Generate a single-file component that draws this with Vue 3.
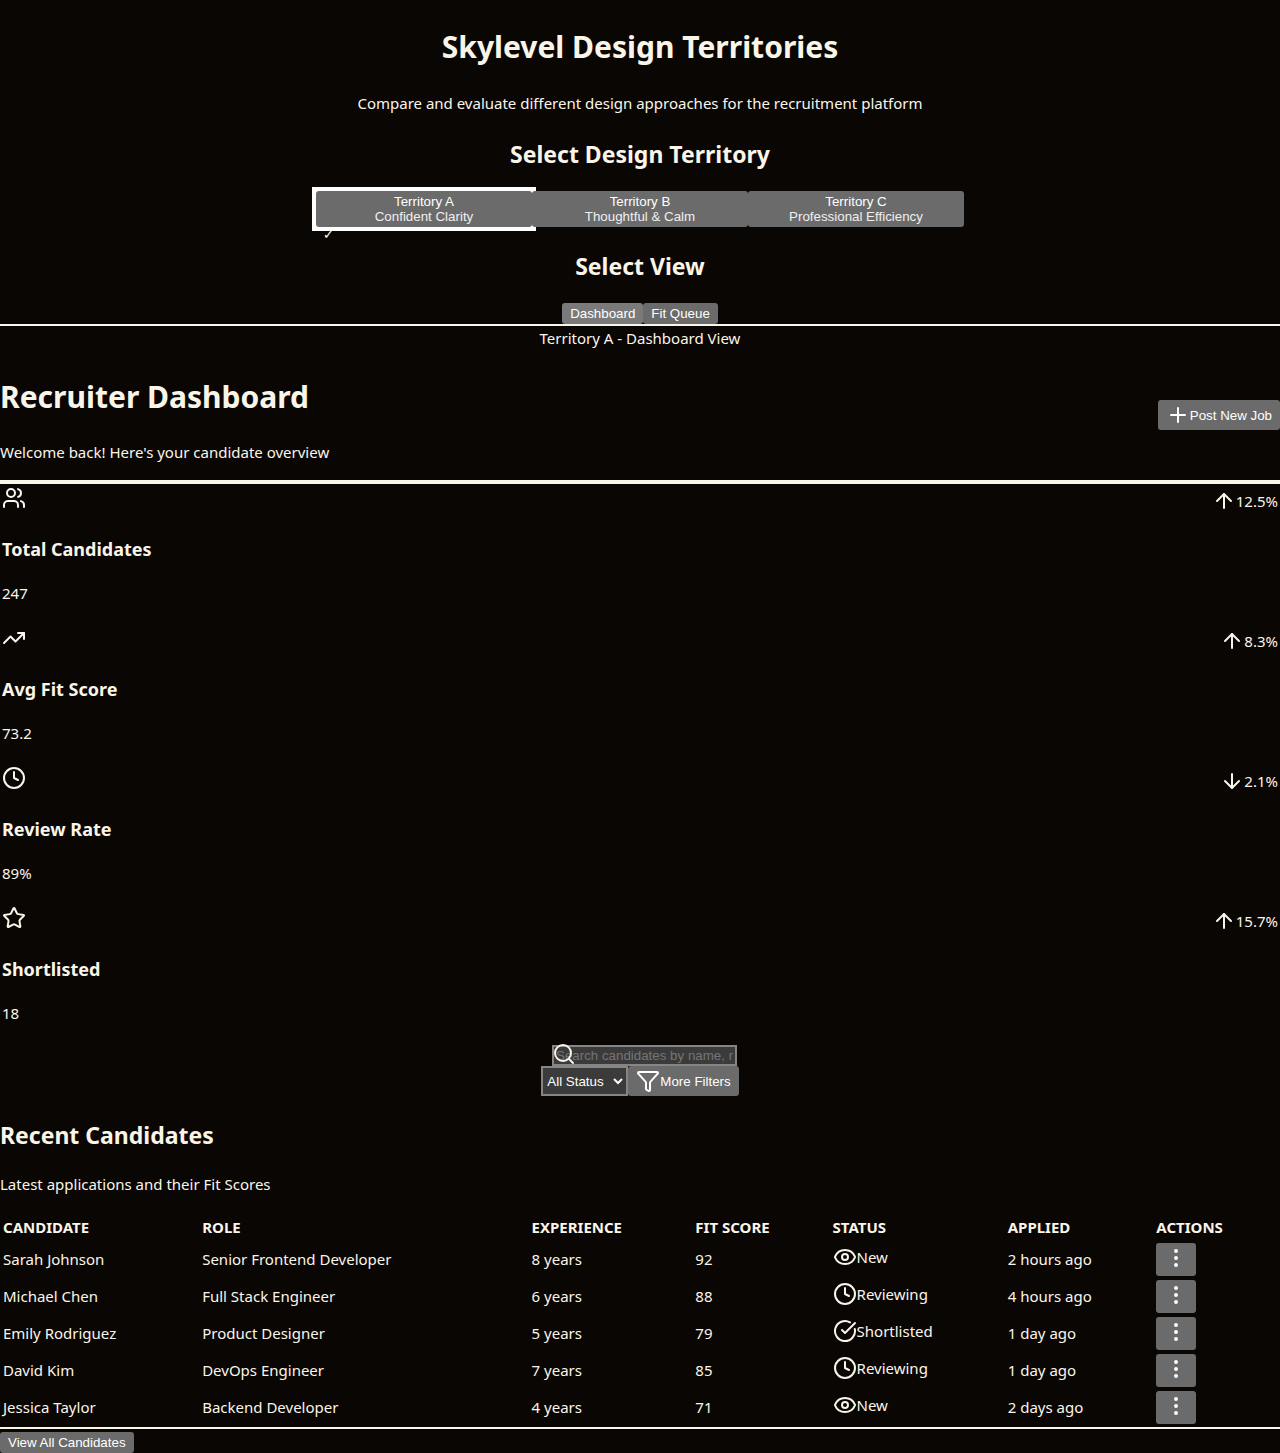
<script setup>
import { ref } from 'vue'

const territories = [
  { id: 'A', name: 'Confident Clarity' },
  { id: 'B', name: 'Thoughtful & Calm' },
  { id: 'C', name: 'Professional Efficiency' },
]
const territory = ref('A')

const views = ['Dashboard', 'Fit Queue']
const view = ref('Dashboard')

const icons = {
  plus: ['M5 12h14', 'M12 5v14'],
  up: ['m5 12 7-7 7 7', 'M12 19V5'],
  down: ['M12 5v14', 'm19 12-7 7-7-7'],
  users: [
    'M16 21v-2a4 4 0 0 0-4-4H6a4 4 0 0 0-4 4v2',
    'M16 3.128a4 4 0 0 1 0 7.744',
    'M22 21v-2a4 4 0 0 0-3-3.87',
    'M5 7a4 4 0 1 0 8 0a4 4 0 1 0-8 0',
  ],
  trend: ['M16 7h6v6', 'm22 7-8.5 8.5-5-5L2 17'],
  clock: ['M12 6v6l4 2', 'M2 12a10 10 0 1 0 20 0a10 10 0 1 0-20 0'],
  star: [
    'M11.525 2.295a.53.53 0 0 1 .95 0l2.31 4.679a2.123 2.123 0 0 0 1.595 1.16l5.166.756a.53.53 0 0 1 .294.904l-3.736 3.638a2.123 2.123 0 0 0-.611 1.878l.882 5.14a.53.53 0 0 1-.771.56l-4.618-2.428a2.122 2.122 0 0 0-1.973 0L6.396 21.01a.53.53 0 0 1-.77-.56l.881-5.139a2.122 2.122 0 0 0-.611-1.879L2.16 9.795a.53.53 0 0 1 .294-.906l5.165-.755a2.122 2.122 0 0 0 1.597-1.16z',
  ],
  search: ['m21 21-4.34-4.34', 'M3 11a8 8 0 1 0 16 0a8 8 0 1 0-16 0'],
  funnel: [
    'M10 20a1 1 0 0 0 .553.895l2 1A1 1 0 0 0 14 21v-7a2 2 0 0 1 .517-1.341L21.74 4.67A1 1 0 0 0 21 3H3a1 1 0 0 0-.742 1.67l7.225 7.989A2 2 0 0 1 10 14z',
  ],
  eye: [
    'M2.062 12.348a1 1 0 0 1 0-.696 10.75 10.75 0 0 1 19.876 0 1 1 0 0 1 0 .696 10.75 10.75 0 0 1-19.876 0',
    'M9 12a3 3 0 1 0 6 0a3 3 0 1 0-6 0',
  ],
  check: ['M21.801 10A10 10 0 1 1 17 3.335', 'm9 11 3 3L22 4'],
  more: [
    'M11 12a1 1 0 1 0 2 0a1 1 0 1 0-2 0',
    'M11 5a1 1 0 1 0 2 0a1 1 0 1 0-2 0',
    'M11 19a1 1 0 1 0 2 0a1 1 0 1 0-2 0',
  ],
}

const stats = [
  { icon: 'users', label: 'Total Candidates', value: '247', dir: 'up', change: '12.5%' },
  { icon: 'trend', label: 'Avg Fit Score', value: '73.2', dir: 'up', change: '8.3%' },
  { icon: 'clock', label: 'Review Rate', value: '89%', dir: 'down', change: '2.1%' },
  { icon: 'star', label: 'Shortlisted', value: '18', dir: 'up', change: '15.7%' },
]

const columns = ['Candidate', 'Role', 'Experience', 'Fit Score', 'Status', 'Applied', 'Actions']

const statusIcon = { New: 'eye', Reviewing: 'clock', Shortlisted: 'check' }

const candidates = [
  { name: 'Sarah Johnson', role: 'Senior Frontend Developer', exp: '8 years', score: 92, status: 'New', applied: '2 hours ago' },
  { name: 'Michael Chen', role: 'Full Stack Engineer', exp: '6 years', score: 88, status: 'Reviewing', applied: '4 hours ago' },
  { name: 'Emily Rodriguez', role: 'Product Designer', exp: '5 years', score: 79, status: 'Shortlisted', applied: '1 day ago' },
  { name: 'David Kim', role: 'DevOps Engineer', exp: '7 years', score: 85, status: 'Reviewing', applied: '1 day ago' },
  { name: 'Jessica Taylor', role: 'Backend Developer', exp: '4 years', score: 71, status: 'New', applied: '2 days ago' },
]
</script>

<template>
  <div class="page">
    <header class="selector">
      <h1>Skylevel Design Territories</h1>
      <p class="intro">Compare and evaluate different design approaches for the recruitment platform</p>

      <h2>Select Design Territory</h2>
      <div class="territories">
        <div v-for="t in territories" :key="t.id" class="territory" :class="{ active: territory === t.id }">
          <button type="button" class="btn" :aria-pressed="territory === t.id" @click="territory = t.id">
            <span>Territory {{ t.id }}</span>
            <span class="sub">{{ t.name }}</span>
          </button>
          <span v-if="territory === t.id" class="tick">✓</span>
        </div>
      </div>

      <h2 class="view-title">Select View</h2>
      <div class="views">
        <button
          v-for="v in views" :key="v" type="button" class="btn"
          :class="{ current: view === v }" @click="view = v"
        >{{ v }}</button>
      </div>
    </header>

    <div class="caption">Territory {{ territory }} - {{ view }} View</div>

    <main>
      <header class="dash-head">
        <div>
          <h1>Recruiter Dashboard</h1>
          <p>Welcome back! Here's your candidate overview</p>
        </div>
        <button type="button" class="btn with-icon">
          <svg class="icon" viewBox="0 0 24 24" aria-hidden="true"><path v-for="d in icons.plus" :key="d" :d="d" /></svg>
          <span>Post New Job</span>
        </button>
      </header>

      <section class="stats">
        <article v-for="s in stats" :key="s.label" class="stat">
          <div class="stat-top">
            <svg class="icon" viewBox="0 0 24 24" aria-hidden="true"><path v-for="d in icons[s.icon]" :key="d" :d="d" /></svg>
            <div class="change">
              <svg class="icon" viewBox="0 0 24 24" aria-hidden="true"><path v-for="d in icons[s.dir]" :key="d" :d="d" /></svg>
              <span>{{ s.change }}</span>
            </div>
          </div>
          <h3>{{ s.label }}</h3>
          <p>{{ s.value }}</p>
        </article>
      </section>

      <section class="filters">
        <div class="search">
          <input type="text" aria-label="Search candidates" placeholder="Search candidates by name, role, or skills..." />
          <svg class="icon" viewBox="0 0 24 24" aria-hidden="true"><path v-for="d in icons.search" :key="d" :d="d" /></svg>
        </div>
        <div class="filter-row">
          <select aria-label="Status">
            <option>All Status</option>
            <option>New</option>
            <option>Reviewing</option>
            <option>Shortlisted</option>
          </select>
          <button type="button" class="btn with-icon">
            <svg class="icon" viewBox="0 0 24 24" aria-hidden="true"><path v-for="d in icons.funnel" :key="d" :d="d" /></svg>
            <span>More Filters</span>
          </button>
        </div>
      </section>

      <section class="recent">
        <h2>Recent Candidates</h2>
        <p>Latest applications and their Fit Scores</p>
        <table>
          <colgroup>
            <col class="c-name" /><col class="c-role" /><col class="c-exp" /><col class="c-score" />
            <col class="c-status" /><col class="c-applied" /><col />
          </colgroup>
          <thead>
            <tr><th v-for="c in columns" :key="c" scope="col">{{ c }}</th></tr>
          </thead>
          <tbody>
            <tr v-for="c in candidates" :key="c.name">
              <td>{{ c.name }}</td>
              <td>{{ c.role }}</td>
              <td>{{ c.exp }}</td>
              <td>{{ c.score }}</td>
              <td>
                <div class="status">
                  <svg class="icon" viewBox="0 0 24 24" aria-hidden="true"><path v-for="d in icons[statusIcon[c.status]]" :key="d" :d="d" /></svg>
                  <span>{{ c.status }}</span>
                </div>
              </td>
              <td>{{ c.applied }}</td>
              <td>
                <button type="button" class="btn more" :aria-label="'Actions for ' + c.name">
                  <svg class="icon" viewBox="0 0 24 24" aria-hidden="true"><path v-for="d in icons.more" :key="d" :d="d" /></svg>
                </button>
              </td>
            </tr>
          </tbody>
        </table>
        <footer>
          <button type="button" class="btn">View All Candidates</button>
        </footer>
      </section>
    </main>
  </div>
</template>

<style>
body {
  margin: 0;
  background: #0a0604;
}
</style>

<style scoped>
.page {
  color: #faf5e9;
  background: #0a0604;
  font-family: "Segoe UI", "Noto Sans", "Open Sans", sans-serif;
  font-size: 15px;
  line-height: 21px;
}
h1, h2, h3, p {
  margin: 0;
}
h1 {
  font-size: 30px;
  line-height: 43px;
}
h2 {
  font-size: 23px;
  line-height: 32px;
}
h3 {
  font-size: 18px;
  line-height: 25px;
}
.icon {
  display: block;
  flex: none;
  width: 24px;
  height: 24px;
  fill: none;
  stroke: currentColor;
  stroke-width: 2;
  stroke-linecap: round;
  stroke-linejoin: round;
}
.btn {
  box-sizing: border-box;
  min-height: 21px;
  padding: 3px 8px;
  border: 0;
  border-radius: 3px;
  background: #6b6b6b;
  color: #fff;
  font-family: Arial, "Liberation Sans", sans-serif;
  line-height: 15px;
}
.with-icon {
  display: flex;
  align-items: center;
}

.selector {
  padding-top: 25px;
  border-bottom: 2px solid #faf5e9;
  text-align: center;
}
.intro {
  margin: 25px 0 24px;
}
.territories {
  display: flex;
  justify-content: center;
  margin-top: 21px;
}
.territory {
  position: relative;
  width: 216px;
}
.territory.active {
  background: #fff;
  box-shadow: 0 0 0 4px #fff;
}
.territory .btn {
  display: block;
  width: 100%;
}
.territory .btn span {
  display: block;
}
.territory .sub {
  opacity: 0.9;
}
.tick {
  position: absolute;
  left: 7px;
  bottom: -14px;
  color: #fff;
  font-size: 13px;
  line-height: 14px;
}
.view-title {
  margin-top: 23px;
}
.views {
  display: flex;
  justify-content: center;
  margin-top: 21px;
}
.btn.current {
  background: #7a7a7a;
}

.caption {
  padding: 2px 0 1px;
  text-align: center;
}
.dash-head {
  display: flex;
  align-items: center;
  justify-content: space-between;
  border-bottom: 4px solid #faf5e9;
}
.dash-head h1 {
  padding-top: 25px;
}
.dash-head p {
  padding: 24px 0 17px;
}

.stat {
  padding: 2px 2px 20px;
}
.stat-top {
  display: flex;
  justify-content: space-between;
  height: 30px;
}
.change {
  display: flex;
  align-items: center;
}
.stat h3 {
  margin: 21px 0;
}

.filters {
  display: flex;
  flex-direction: column;
  align-items: center;
  padding-top: 1px;
}
.search {
  position: relative;
  margin-left: 9px;
}
.search input {
  display: block;
  box-sizing: border-box;
  width: 185px;
  height: 21px;
  padding: 1px 2px;
  border: 2px solid #858585;
  background: #3b3b3b;
  color: #fff;
  font-family: Arial, "Liberation Sans", sans-serif;
}
.search input::placeholder {
  color: #757575;
}
.search .icon {
  position: absolute;
  left: 0;
  bottom: 0;
}
.filter-row {
  display: flex;
}
.filter-row select {
  width: 87px;
  height: 30px;
  border: 2px solid #858585;
  border-radius: 0;
  background-color: #3b3b3b;
  color: #fff;
  font-family: Arial, "Liberation Sans", sans-serif;
}

.recent h2 {
  margin: 23px 0;
}
.recent p {
  margin-bottom: 18px;
}
table {
  width: 100%;
  table-layout: fixed;
  border-collapse: separate;
  border-spacing: 2px;
}
.c-name { width: 15.6%; }
.c-role { width: 25.9%; }
.c-exp { width: 12.8%; }
.c-score { width: 10.7%; }
.c-status { width: 13.7%; }
.c-applied { width: 11.6%; }
th, td {
  padding: 1px;
  text-align: left;
  vertical-align: middle;
}
th {
  line-height: 23px;
  text-transform: uppercase;
}
.status {
  display: flex;
  align-items: center;
  padding-bottom: 5px;
}
.more {
  display: block;
  width: 40px;
  height: 33px;
  padding: 3px 8px 6px;
}
footer {
  padding-top: 3px;
  border-top: 2px solid #faf5e9;
}
footer .btn {
  display: block;
}
</style>
